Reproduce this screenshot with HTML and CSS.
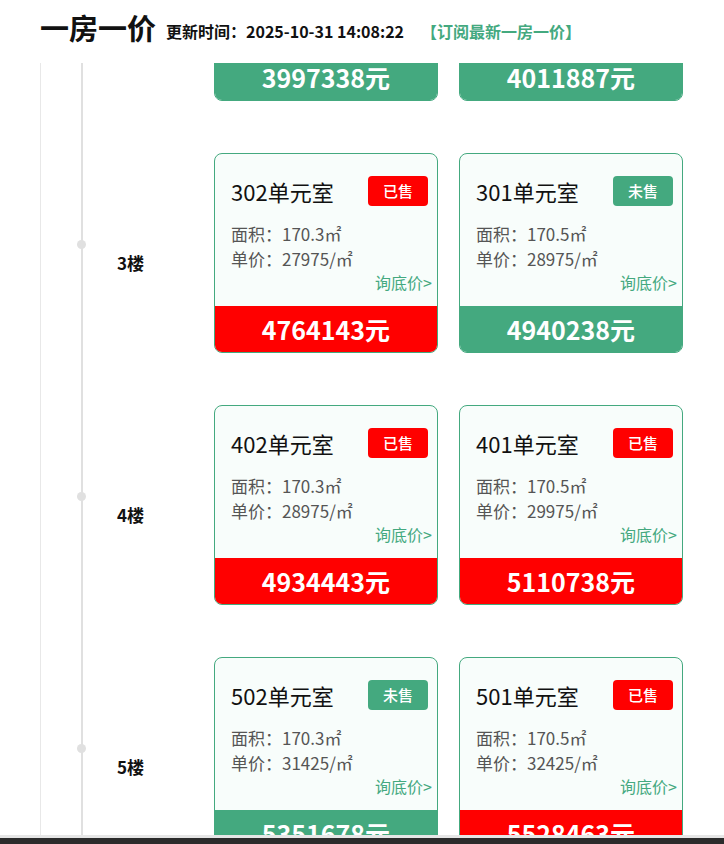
FILE: index.html
```html
<!DOCTYPE html>
<html lang="zh-CN">
<head>
  <meta charset="UTF-8">
  <meta name="viewport" content="width=device-width, initial-scale=1.0">
  <title>一房一价</title>
  <link rel="stylesheet" href="styles.css">
</head>
<body>
  <div class="header">
    <h1>一房一价</h1>
    <span class="update-time">更新时间：2025-10-31 14:08:22</span>
    <a class="subscribe" href="#">【订阅最新一房一价】</a>
  </div>

  <div class="scroll" id="scroll">
    <div class="rail">
      <div class="track">

        <!-- 2楼 -->
        <div class="floor">
          <div class="floor-name">2楼</div>
          <div class="rooms">
            <div class="card">
              <div class="card-head">
                <span class="room-name">202单元室</span>
                <span class="badge badge-unsold">未售</span>
              </div>
              <div class="card-info">
                <p>面积：170.3㎡</p>
                <p>单价：23472/㎡</p>
              </div>
              <a class="ask" href="#">询底价&gt;</a>
              <div class="price price-unsold">3997338元</div>
            </div>
            <div class="card">
              <div class="card-head">
                <span class="room-name">201单元室</span>
                <span class="badge badge-unsold">未售</span>
              </div>
              <div class="card-info">
                <p>面积：170.5㎡</p>
                <p>单价：23530/㎡</p>
              </div>
              <a class="ask" href="#">询底价&gt;</a>
              <div class="price price-unsold">4011887元</div>
            </div>
          </div>
        </div>

        <!-- 3楼 -->
        <div class="floor">
          <div class="floor-name">3楼</div>
          <div class="rooms">
            <div class="card">
              <div class="card-head">
                <span class="room-name">302单元室</span>
                <span class="badge badge-sold">已售</span>
              </div>
              <div class="card-info">
                <p>面积：170.3㎡</p>
                <p>单价：27975/㎡</p>
              </div>
              <a class="ask" href="#">询底价&gt;</a>
              <div class="price price-sold">4764143元</div>
            </div>
            <div class="card">
              <div class="card-head">
                <span class="room-name">301单元室</span>
                <span class="badge badge-unsold">未售</span>
              </div>
              <div class="card-info">
                <p>面积：170.5㎡</p>
                <p>单价：28975/㎡</p>
              </div>
              <a class="ask" href="#">询底价&gt;</a>
              <div class="price price-unsold">4940238元</div>
            </div>
          </div>
        </div>

        <!-- 4楼 -->
        <div class="floor">
          <div class="floor-name">4楼</div>
          <div class="rooms">
            <div class="card">
              <div class="card-head">
                <span class="room-name">402单元室</span>
                <span class="badge badge-sold">已售</span>
              </div>
              <div class="card-info">
                <p>面积：170.3㎡</p>
                <p>单价：28975/㎡</p>
              </div>
              <a class="ask" href="#">询底价&gt;</a>
              <div class="price price-sold">4934443元</div>
            </div>
            <div class="card">
              <div class="card-head">
                <span class="room-name">401单元室</span>
                <span class="badge badge-sold">已售</span>
              </div>
              <div class="card-info">
                <p>面积：170.5㎡</p>
                <p>单价：29975/㎡</p>
              </div>
              <a class="ask" href="#">询底价&gt;</a>
              <div class="price price-sold">5110738元</div>
            </div>
          </div>
        </div>

        <!-- 5楼 -->
        <div class="floor">
          <div class="floor-name">5楼</div>
          <div class="rooms">
            <div class="card">
              <div class="card-head">
                <span class="room-name">502单元室</span>
                <span class="badge badge-unsold">未售</span>
              </div>
              <div class="card-info">
                <p>面积：170.3㎡</p>
                <p>单价：31425/㎡</p>
              </div>
              <a class="ask" href="#">询底价&gt;</a>
              <div class="price price-unsold">5351678元</div>
            </div>
            <div class="card">
              <div class="card-head">
                <span class="room-name">501单元室</span>
                <span class="badge badge-sold">已售</span>
              </div>
              <div class="card-info">
                <p>面积：170.5㎡</p>
                <p>单价：32425/㎡</p>
              </div>
              <a class="ask" href="#">询底价&gt;</a>
              <div class="price price-sold">5528463元</div>
            </div>
          </div>
        </div>

      </div>
    </div>
  </div>

  <div class="footer"></div>

  <script>
    // keep list scrolled to where the 3楼 row is in view
    document.getElementById('scroll').scrollTop = 187;
  </script>
</body>
</html>
```

FILE: styles.css
```css
/* Global */
body {
  margin: 0;
  padding: 0;
  background-color: #fff;
  color: #111;
  font-family: "Noto Sans CJK SC", "Noto Sans", sans-serif;
}
p {
  margin: 0;
}
a {
  text-decoration: none;
}

/* Header */
.header {
  display: flex;
  align-items: baseline;
  height: 63px;
  box-sizing: border-box;
  padding: 9px 0 0 40px;
}
.header h1 {
  margin: 0 10px 0 0;
  font-size: 29px;
  line-height: 36px;
  font-weight: bold;
  color: #111;
}
.update-time {
  position: relative;
  top: -2px;
  font-size: 16px;
  font-weight: bold;
  color: #111;
}
.subscribe {
  position: relative;
  top: -2px;
  margin-left: 17px;
  font-size: 16px;
  font-weight: bold;
  color: #44a97f;
}

/* Scroll area + timeline */
.scroll {
  height: 772px;
  overflow: hidden;
  border-bottom: 3px solid #e6e6e6;
}
.rail {
  margin-left: 40px;
  padding-left: 40px;
  border-left: 1px solid #e8e8e8;
}
.track {
  border-left: 2px solid #e0e0e0;
}
.floor {
  position: relative;
  display: flex;
  padding: 25px 0 27px;
}
.floor::before {
  content: "";
  position: absolute;
  left: -6px;
  top: 112px;
  width: 9px;
  height: 9px;
  border-radius: 50%;
  background-color: #e0e0e0;
}
.floor-name {
  width: 131px;
  box-sizing: border-box;
  padding-left: 34px;
  margin-top: 98px;
  font-size: 17px;
  line-height: 24px;
  font-weight: bold;
  color: #111;
}
.rooms {
  display: flex;
  gap: 21px;
}

/* Card */
.card {
  display: flex;
  flex-direction: column;
  width: 224px;
  height: 200px;
  box-sizing: border-box;
  border: 1px solid #44a97f;
  border-radius: 8px;
  overflow: hidden;
  background-color: #f8fdfb;
}
.card-head {
  display: flex;
  justify-content: space-between;
  align-items: center;
  padding: 22px 9px 0 16px;
}
.room-name {
  font-size: 22px;
  line-height: 30px;
  color: #111;
}
.badge {
  width: 60px;
  height: 30px;
  border-radius: 4px;
  line-height: 30px;
  text-align: center;
  font-size: 15px;
  font-weight: 500;
  color: #fff;
}
.badge-sold {
  background-color: #ff0000;
}
.badge-unsold {
  background-color: #44a97f;
}
.card-info {
  margin-top: 15px;
  padding-left: 16px;
  font-size: 17px;
  line-height: 25px;
  color: #555;
}
.ask {
  align-self: flex-end;
  margin-right: 5px;
  font-size: 16px;
  line-height: 22px;
  color: #44a97f;
}
.price {
  margin-top: auto;
  height: 46px;
  line-height: 46px;
  text-align: center;
  font-size: 25px;
  font-weight: bold;
  color: #fff;
}
.price-sold {
  background-color: #ff0000;
}
.price-unsold {
  background-color: #44a97f;
}

/* Footer bar */
.footer {
  height: 6px;
  background-color: #2b2b2b;
}
```
